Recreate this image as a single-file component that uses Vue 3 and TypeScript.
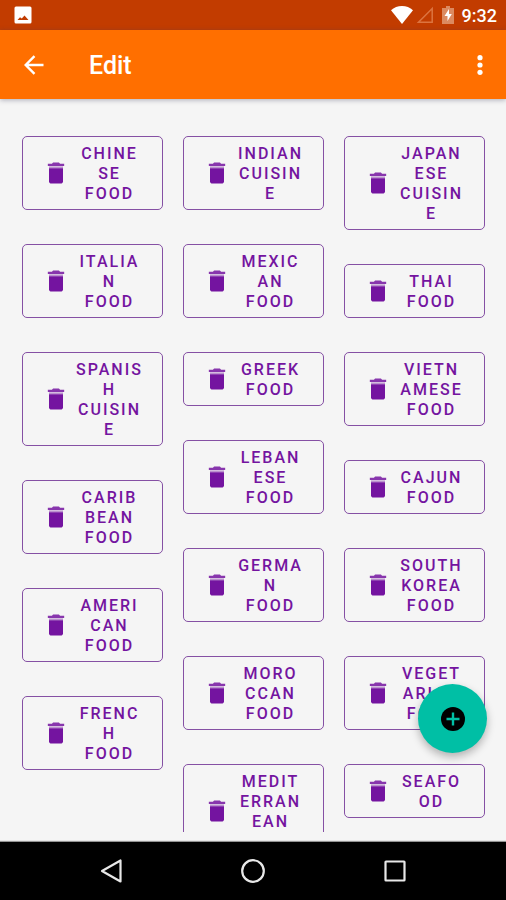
<script setup lang="ts">
interface Category {
  id: string
  lines: string[]
}

// A bar marks where a long word is broken; a space always starts a new line.
const names: string[][] = [
  ['Chine|se Food', 'Italia|n Food', 'Spanis|h Cuisin|e', 'Carib|bean Food', 'Ameri|can Food', 'Frenc|h Food'],
  ['Indian Cuisin|e', 'Mexic|an Food', 'Greek Food', 'Leban|ese Food', 'Germa|n Food', 'Moro|ccan Food', 'Medit|erran|ean Food'],
  ['Japan|ese Cuisin|e', 'Thai Food', 'Vietn|amese Food', 'Cajun Food', 'South Korea Food', 'Veget|arian Food', 'Seafo|od'],
]

const columns: Category[][] = names.map((column) =>
  column.map((name) => ({
    id: name.split('|').join(''),
    lines: name.split(/[| ]/),
  })),
)
</script>

<template>
  <div class="screen">
    <div class="status">
      <svg class="status-photo" viewBox="0 0 18 18" aria-hidden="true">
        <rect x="0.5" y="0.5" width="17" height="17" rx="1.5" fill="#fff" />
        <path d="M3.500 14l2.500-2.800 1.800 1.200 2.700-2.900 4 4.500z" fill="#c23c00" />
      </svg>
      <div class="status-right">
        <svg class="wifi" viewBox="0 0 22 18" aria-hidden="true">
          <path d="M11 18L0 4.200C3 1.600 6.800 0 11 0s8 1.600 11 4.200z" fill="#fff" />
        </svg>
        <svg class="signal" viewBox="0 0 18 18" aria-hidden="true">
          <path d="M16.200 2.500v13.700H2.500z" fill="none" stroke="#dc7440" stroke-width="1.500" />
        </svg>
        <svg class="battery" viewBox="0 0 12 18" aria-hidden="true">
          <path d="M4 0h4v2h4v16H0V2h4z" fill="#dc8a60" />
          <path d="M7 3L2.500 10H5.500v5L9.800 8H7z" fill="#fff" />
        </svg>
        <span class="time">9:32</span>
      </div>
    </div>

    <header class="appbar">
      <button class="icon-button" type="button" aria-label="Back">
        <svg class="back" viewBox="0 0 20 20" aria-hidden="true">
          <path d="M19.500 10H2M10.500 1.200L1.700 10l8.800 8.800" fill="none" stroke="#fff" stroke-width="2.400" />
        </svg>
      </button>
      <h1>Edit</h1>
      <button class="icon-button more-button" type="button" aria-label="More options">
        <svg class="more" viewBox="0 0 6 20" aria-hidden="true">
          <circle cx="3" cy="2.700" r="2.600" fill="#fff" />
          <circle cx="3" cy="10" r="2.600" fill="#fff" />
          <circle cx="3" cy="17.300" r="2.600" fill="#fff" />
        </svg>
      </button>
    </header>

    <main class="content">
      <div class="grid">
        <div v-for="(column, index) in columns" :key="index" class="column">
          <button v-for="item in column" :key="item.id" class="category" type="button">
            <svg class="trash" viewBox="0 0 24 24" aria-hidden="true">
              <path d="M6 19c0 1.100.9 2 2 2h8c1.100 0 2-.9 2-2V8H6z" fill="#7414a0" />
              <path d="M6 7h12v1H6z" fill="#7414a0" opacity="0.500" />
              <path d="M19 4h-3.500l-1-1h-5l-1 1H5v2h14z" fill="#7414a0" opacity="0.850" />
              <path d="M6 6h12v1H6z" fill="#7414a0" opacity="0.250" />
            </svg>
            <span class="label">
              <span v-for="(line, lineIndex) in item.lines" :key="lineIndex" class="line">{{ line }}</span>
            </span>
          </button>
        </div>
      </div>
      <button class="fab" type="button" aria-label="Add category">
        <svg class="plus" viewBox="0 0 24 24" aria-hidden="true">
          <circle cx="12" cy="12" r="12" fill="#000" />
          <path d="M12 5.500v13M5.500 12h13" fill="none" stroke="#00bfa5" stroke-width="2.400" />
        </svg>
      </button>
    </main>

    <nav class="navbar" aria-label="System">
      <button class="nav-button" type="button" aria-label="Back">
        <svg viewBox="0 0 24 24" aria-hidden="true">
          <path d="M21.500 1.500v21L3 12z" fill="none" stroke="#e8e8e8" stroke-width="2.200" stroke-linejoin="round" />
        </svg>
      </button>
      <button class="nav-button" type="button" aria-label="Home">
        <svg viewBox="0 0 24 24" aria-hidden="true">
          <circle cx="12" cy="12" r="10.800" fill="none" stroke="#e8e8e8" stroke-width="2.200" />
        </svg>
      </button>
      <button class="nav-button" type="button" aria-label="Recent apps">
        <svg viewBox="0 0 24 24" aria-hidden="true">
          <rect x="2.500" y="2.500" width="19" height="19" rx="0.500" fill="none" stroke="#e8e8e8" stroke-width="2.200" />
        </svg>
      </button>
    </nav>
  </div>
</template>

<style>
body {
  margin: 0;
  background: #f5f5f5;
}
</style>

<style scoped>
.screen {
  display: flex;
  flex-direction: column;
  height: 100vh;
  background: #f5f5f5;
  font-family: Roboto, "Liberation Sans", sans-serif;
}

button {
  margin: 0;
  padding: 0;
  border: 0;
  background: none;
  font: inherit;
  cursor: pointer;
}

svg {
  display: block;
  flex: none;
}

.status {
  display: flex;
  align-items: center;
  justify-content: space-between;
  flex: none;
  height: 30px;
  padding: 0 9px 0 14px;
  background: #c23c00;
}

.status-photo {
  width: 18px;
  height: 18px;
}

.status-right {
  display: flex;
  align-items: center;
}

.wifi {
  width: 22px;
  height: 18px;
}

.signal {
  width: 18px;
  height: 18px;
  margin-left: 3px;
}

.battery {
  width: 12px;
  height: 18px;
  margin-left: 8px;
}

.time {
  padding-top: 2px;
  margin-left: 8px;
  color: #fff;
  font-size: 18px;
  font-weight: 500;
  line-height: 28px;
}

.appbar {
  display: flex;
  align-items: center;
  flex: none;
  height: 69px;
  padding: 0 9px 0 10px;
  background: #ff6f00;
  box-shadow: 0 1px 5px rgba(60, 60, 90, 0.4);
  z-index: 1;
}

.icon-button {
  display: flex;
  align-items: center;
  justify-content: center;
  width: 48px;
  height: 48px;
}

.back {
  width: 20px;
  height: 20px;
}

.more-button {
  width: 34px;
  margin-left: auto;
}

.more {
  width: 6px;
  height: 20px;
}

h1 {
  margin: 0 0 0 31px;
  padding-top: 2px;
  color: #fff;
  font-size: 25px;
  font-weight: 500;
  line-height: 32px;
}

.content {
  position: relative;
  display: flex;
  flex: 1;
  min-height: 0;
  padding-bottom: 10px;
}

.grid {
  display: grid;
  flex: 1;
  grid-template-columns: repeat(3, minmax(0, 1fr));
  gap: 20px;
  padding: 37px 21px 0 22px;
  overflow-y: auto;
  scrollbar-width: none;
}

.column {
  display: flex;
  flex-direction: column;
  gap: 34px;
}

.category {
  display: flex;
  align-items: center;
  flex: none;
  padding: 5px 18px 5px 19px;
  border: 1px solid #8550a4;
  border-radius: 5px;
  color: #7414a0;
}

.trash {
  width: 28px;
  height: 28px;
}

.label {
  flex: 1;
  min-width: 0;
  margin-left: 5px;
  padding-top: 2px;
  font-size: 16px;
  font-weight: 500;
  line-height: 20px;
  letter-spacing: 2px;
  text-align: center;
  text-transform: uppercase;
}

.line {
  display: block;
}

.fab {
  position: absolute;
  right: 19px;
  bottom: 89px;
  display: flex;
  align-items: center;
  justify-content: center;
  width: 69px;
  height: 69px;
  border-radius: 50%;
  background: #00bfa5;
  box-shadow: 0 4px 8px rgba(0, 0, 0, 0.28);
}

.plus {
  width: 24px;
  height: 24px;
}

.navbar {
  display: flex;
  align-items: center;
  justify-content: center;
  flex: none;
  gap: 94px;
  height: 58px;
  background: #000;
  box-shadow: 0 -1px 1px rgba(0, 0, 0, 0.4);
}

.nav-button {
  display: flex;
  align-items: center;
  justify-content: center;
  width: 48px;
  height: 48px;
}

.nav-button svg {
  width: 24px;
  height: 24px;
}
</style>
